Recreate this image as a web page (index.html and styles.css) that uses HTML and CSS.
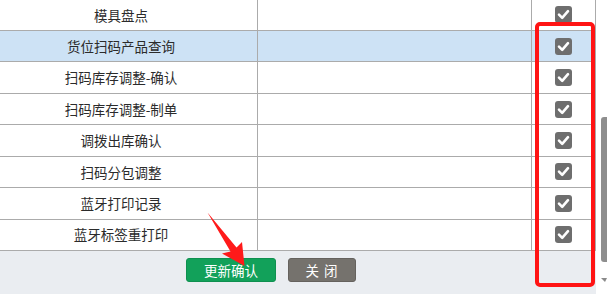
FILE: index.html
```html
<!DOCTYPE html>
<html lang="zh-CN">
<head>
<meta charset="utf-8">
<title>权限配置</title>
<link rel="stylesheet" href="styles.css">
</head>
<body>
<div class="page">
  <div class="panel">
    <div class="rows">
      <div class="row"><div class="cell name">模具盘点</div><div class="cell"></div><div class="cell chk"><span class="box"><svg viewBox="0 0 17 17"><path d="M4 8.6 L7.2 11.8 L13 5.2"/></svg></span></div></div>
      <div class="row active"><div class="cell name">货位扫码产品查询</div><div class="cell"></div><div class="cell chk"><span class="box"><svg viewBox="0 0 17 17"><path d="M4 8.6 L7.2 11.8 L13 5.2"/></svg></span></div></div>
      <div class="row"><div class="cell name">扫码库存调整-确认</div><div class="cell"></div><div class="cell chk"><span class="box"><svg viewBox="0 0 17 17"><path d="M4 8.6 L7.2 11.8 L13 5.2"/></svg></span></div></div>
      <div class="row"><div class="cell name">扫码库存调整-制单</div><div class="cell"></div><div class="cell chk"><span class="box"><svg viewBox="0 0 17 17"><path d="M4 8.6 L7.2 11.8 L13 5.2"/></svg></span></div></div>
      <div class="row"><div class="cell name">调拨出库确认</div><div class="cell"></div><div class="cell chk"><span class="box"><svg viewBox="0 0 17 17"><path d="M4 8.6 L7.2 11.8 L13 5.2"/></svg></span></div></div>
      <div class="row"><div class="cell name">扫码分包调整</div><div class="cell"></div><div class="cell chk"><span class="box"><svg viewBox="0 0 17 17"><path d="M4 8.6 L7.2 11.8 L13 5.2"/></svg></span></div></div>
      <div class="row"><div class="cell name">蓝牙打印记录</div><div class="cell"></div><div class="cell chk"><span class="box"><svg viewBox="0 0 17 17"><path d="M4 8.6 L7.2 11.8 L13 5.2"/></svg></span></div></div>
      <div class="row"><div class="cell name">蓝牙标签重打印</div><div class="cell"></div><div class="cell chk"><span class="box"><svg viewBox="0 0 17 17"><path d="M4 8.6 L7.2 11.8 L13 5.2"/></svg></span></div></div>
    </div>
    <div class="footer">
      <button class="btn btn-ok">更新确认</button>
      <button class="btn btn-close">关 闭</button>
    </div>
  </div>
  <div class="rail">
    <div class="thumb"></div>
    <div class="arrow-down"></div>
  </div>
  <div class="mark-box"></div>
  <svg class="mark-arrow" width="60" height="70" viewBox="200 205 60 70">
    <polygon points="207.5,212.5 236.5,247.5 242,242 244.5,266 222,253.5 230.5,251.5"/>
  </svg>
</div>
</body>
</html>
```

FILE: styles.css
```css
html, body {
  margin: 0;
  padding: 0;
  background: #ffffff;
}

.page {
  position: relative;
  width: 607px;
  height: 294px;
  overflow: hidden;
  display: flex;
  font-family: "Noto Sans CJK SC", "Microsoft YaHei", sans-serif;
}

.panel {
  width: 596px;
  height: 294px;
  display: flex;
  flex-direction: column;
}

.rows {
  margin-top: -0.43px;
}

.row {
  display: grid;
  grid-template-columns: 258px 274px 64px;
  height: 31.43px;
  box-sizing: border-box;
  border-bottom: 1px solid #ababab;
  background: #ffffff;
}

.row.active {
  background: #cde2f5;
}

.cell {
  border-right: 1px solid #ababab;
  box-sizing: border-box;
  display: flex;
  align-items: center;
  justify-content: center;
}

.name {
  font-size: 13.5px;
  color: #2b2b2b;
  line-height: 1;
  padding: 1px 15px 0 0;
}

.box {
  width: 17px;
  height: 17px;
  border-radius: 3px;
  background: #6e6e6e;
  display: block;
}

.box svg {
  width: 17px;
  height: 17px;
  display: block;
}

.box path {
  fill: none;
  stroke: #ffffff;
  stroke-width: 2.6;
  stroke-linecap: round;
  stroke-linejoin: round;
}

.footer {
  flex: 1;
  background: #eaedf1;
  display: flex;
  align-items: flex-start;
  gap: 12px;
  padding: 7px 0 0 186px;
}

.btn {
  height: 24px;
  border-radius: 3px;
  font-family: "Noto Sans CJK SC", sans-serif;
  font-size: 13.5px;
  color: #ffffff;
  padding: 0;
  line-height: 22px;
  cursor: pointer;
}

.btn-ok {
  width: 90px;
  background: #12a15a;
  border: 1px solid #0f9050;
}

.btn-close {
  width: 68px;
  background: #75726d;
  border: 1px solid #65625e;
  letter-spacing: 1px;
}

.rail {
  width: 11px;
  display: flex;
  flex-direction: column;
  align-items: flex-end;
}

.thumb {
  margin-top: 117px;
  width: 6px;
  height: 145px;
  background: #8e8e8e;
  border-radius: 3px 0 0 3px;
}

.arrow-down {
  margin-top: 16px;
  width: 0;
  height: 0;
  border-left: 4px solid transparent;
  border-right: 2px solid transparent;
  border-top: 4px solid #8a8a8a;
}

.mark-box {
  position: absolute;
  left: 535px;
  top: 22px;
  width: 60px;
  height: 265px;
  box-sizing: border-box;
  border: 4px solid #ff1414;
  border-radius: 5px;
}

.mark-arrow {
  position: absolute;
  left: 200px;
  top: 205px;
}

.mark-arrow polygon {
  fill: #ff1a1a;
}
```
